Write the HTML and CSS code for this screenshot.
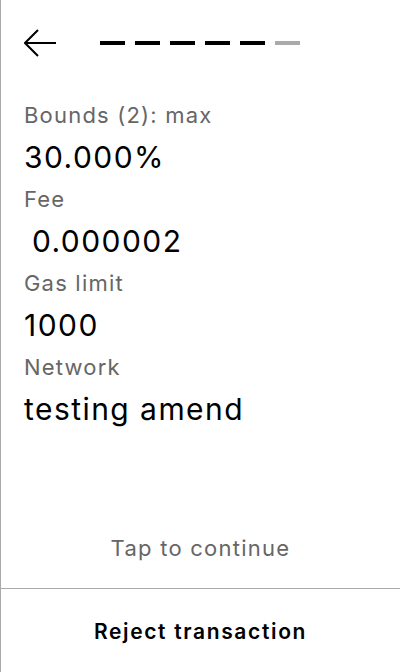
FILE: index.html
```html
<!DOCTYPE html>
<html>
<head>
<meta charset="utf-8">
<link rel="stylesheet" href="styles.css">
</head>
<body>
<div class="screen">
  <header class="header">
    <svg class="back" width="34" height="28" viewBox="0 0 34 28">
      <path d="M14 1 L1 14 L14 27 M1 14 H32" fill="none" stroke="#000" stroke-width="2"/>
    </svg>
    <div class="steps">
      <span class="step"></span>
      <span class="step"></span>
      <span class="step"></span>
      <span class="step"></span>
      <span class="step"></span>
      <span class="step step-off"></span>
    </div>
  </header>
  <main class="content">
    <div class="label">Bounds (2): max</div>
    <div class="value">30.000%</div>
    <div class="label">Fee</div>
    <div class="value value-pre"> 0.000002</div>
    <div class="label">Gas limit</div>
    <div class="value">1000</div>
    <div class="label">Network</div>
    <div class="value">testing amend</div>
  </main>
  <div class="tap">Tap to continue</div>
  <footer class="footer">Reject transaction</footer>
</div>
</body>
</html>
```
FILE: styles.css
```css
html, body {
  margin: 0;
  padding: 0;
  background: #fff;
}
body {
  font-family: Inter, "Noto Sans", sans-serif;
  color: #000;
}
.screen {
  width: 400px;
  height: 672px;
  box-sizing: border-box;
  border-left: 1px solid #aaa;
  display: flex;
  flex-direction: column;
}
.header {
  height: 86px;
  display: flex;
  align-items: center;
  padding-left: 23px;
}
.back {
  display: block;
  margin-right: 42px;
}
.steps {
  display: flex;
  gap: 10px;
}
.step {
  width: 25px;
  height: 4px;
  background: #000;
}
.step-off {
  background: #aaa;
}
.content {
  flex: 1;
  display: flex;
  flex-direction: column;
  gap: 11px;
  padding: 16px 0 0 23px;
}
.label {
  font-size: 22px;
  line-height: 26px;
  letter-spacing: 1.2px;
  color: #666;
}
.value {
  font-size: 30px;
  line-height: 36px;
  letter-spacing: 1.45px;
}
.value-pre {
  white-space: pre;
  word-spacing: -2px;
}
.tap {
  text-align: center;
  font-size: 22px;
  line-height: 26px;
  letter-spacing: 1.25px;
  color: #666;
  padding-bottom: 27px;
}
.footer {
  border-top: 1px solid #aaa;
  height: 84px;
  box-sizing: border-box;
  padding-top: 2px;
  display: flex;
  align-items: center;
  justify-content: center;
  font-size: 21px;
  font-weight: 600;
  letter-spacing: 1.65px;
}
```
